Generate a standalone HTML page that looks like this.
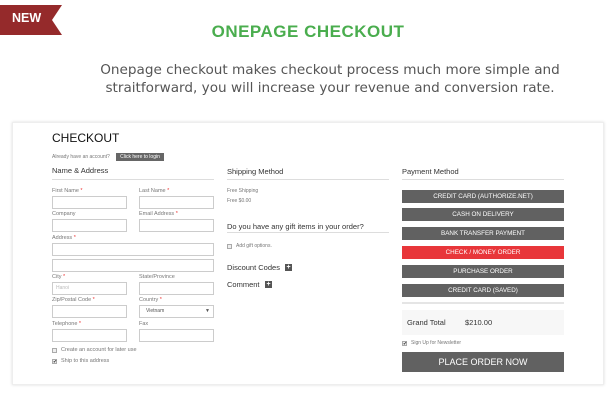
<!DOCTYPE html>
<html><head><style>
*{margin:0;padding:0;box-sizing:border-box}
body{width:616px;height:407px;background:#fff;font-family:"Liberation Sans",sans-serif;position:relative;overflow:hidden;color:#333}
.a{position:absolute;white-space:nowrap}
.l{font-size:5.5px;color:#777}
.l b{color:#e33;font-weight:normal}
.in{position:absolute;border:1px solid #ccc;height:13px;background:#fff}
.h{font-size:7.5px;color:#333}
.ln{position:absolute;height:1px;background:#ddd}
.btn{position:absolute;left:402px;width:162px;height:13px;background:#616161;color:#fff;font-size:6.3px;text-align:center;line-height:13px}
.cb{position:absolute;width:5px;height:5px;border:1px solid #aaa;background:#eee}
.pl{position:absolute;width:7px;height:7px;background:#555;color:#fff;font-size:7px;line-height:7px;text-align:center;font-weight:bold}
</style></head><body>
<svg class="a" style="left:0;top:5px" width="63" height="30"><polygon points="0,0 62,0 52,15 62,30 0,30" fill="#952a2b"/></svg>
<div class="a" style="left:12px;top:11px;color:#fff;font-weight:bold;font-size:12.5px">NEW</div>
<div class="a" style="left:0;width:616px;text-align:center;top:22px;color:#4aad4e;font-weight:bold;font-size:17px;letter-spacing:.5px">ONEPAGE CHECKOUT</div>
<div class="a" style="left:74px;width:512px;text-align:center;top:61px;color:#555;line-height:18px;font-family:'DejaVu Sans',sans-serif;font-size:13.6px">Onepage checkout makes checkout process much more simple and<br>straitforward, you will increase your revenue and conversion rate.</div>
<div class="a" style="left:12px;top:122px;width:592px;height:263px;border:1px solid #eee;box-shadow:0 0 3px #ddd"></div>
<div class="a" style="left:52px;top:131px;font-size:12px;color:#111">CHECKOUT</div>
<div class="a l" style="left:52px;top:154px;font-size:5px">Already have an account?</div>
<div class="a" style="left:116px;top:153px;width:48px;height:8px;background:#666;color:#fff;font-size:5px;line-height:8px;text-align:center">Click here to login</div>
<div class="a h" style="left:52px;top:166px">Name &amp; Address</div>
<div class="ln" style="left:52px;top:179px;width:162px"></div>
<div class="a l" style="left:52px;top:188px">First Name <b>*</b></div><div class="in" style="left:52px;top:196px;width:75px"></div>
<div class="a l" style="left:139px;top:188px">Last Name <b>*</b></div><div class="in" style="left:139px;top:196px;width:75px"></div>
<div class="a l" style="left:52px;top:211px">Company</div><div class="in" style="left:52px;top:219px;width:75px"></div>
<div class="a l" style="left:139px;top:211px">Email Address <b>*</b></div><div class="in" style="left:139px;top:219px;width:75px"></div>
<div class="a l" style="left:52px;top:235px">Address <b>*</b></div><div class="in" style="left:52px;top:243px;width:162px"></div>
<div class="in" style="left:52px;top:259px;width:162px"></div>
<div class="a l" style="left:52px;top:274px">City <b>*</b></div><div class="in" style="left:52px;top:282px;width:75px;font-size:5px;color:#bbb;padding-left:3px;line-height:11px">Hanoi</div>
<div class="a l" style="left:139px;top:274px">State/Province</div><div class="in" style="left:139px;top:282px;width:75px"></div>
<div class="a l" style="left:52px;top:297px">Zip/Postal Code <b>*</b></div><div class="in" style="left:52px;top:305px;width:75px"></div>
<div class="a l" style="left:139px;top:297px">Country <b>*</b></div><div class="in" style="left:139px;top:305px;width:75px;font-size:5px;color:#555;padding-left:6px;line-height:11px">Vietnam<span style="position:absolute;right:3px">▼</span></div>
<div class="a l" style="left:52px;top:321px">Telephone <b>*</b></div><div class="in" style="left:52px;top:329px;width:75px"></div>
<div class="a l" style="left:139px;top:321px">Fax</div><div class="in" style="left:139px;top:329px;width:75px"></div>
<div class="cb" style="left:52px;top:348px"></div><div class="a l" style="left:61px;top:347px">Create an account for later use</div>
<div class="cb" style="left:52px;top:359px;font-size:5px;line-height:4px;color:#333">✔</div><div class="a l" style="left:61px;top:358px">Ship to this address</div>
<div class="a h" style="left:227px;top:167px">Shipping Method</div>
<div class="ln" style="left:227px;top:179px;width:162px"></div>
<div class="a l" style="left:227px;top:188px;font-size:5px">Free Shipping</div>
<div class="a l" style="left:227px;top:198px;font-size:5px">Free $0.00</div>
<div class="a h" style="left:227px;top:222px">Do you have any gift items in your order?</div>
<div class="ln" style="left:227px;top:232px;width:162px"></div>
<div class="cb" style="left:227px;top:244px"></div><div class="a l" style="left:236px;top:243px;font-size:5px">Add gift options.</div>
<div class="a h" style="left:227px;top:263px">Discount Codes</div><div class="pl" style="left:285px;top:264px">+</div>
<div class="a h" style="left:227px;top:280px">Comment</div><div class="pl" style="left:265px;top:281px">+</div>
<div class="a h" style="left:402px;top:167px">Payment Method</div>
<div class="ln" style="left:402px;top:179px;width:162px"></div>
<div class="btn" style="top:190px">CREDIT CARD (AUTHORIZE.NET)</div>
<div class="btn" style="top:208px">CASH ON DELIVERY</div>
<div class="btn" style="top:227px">BANK TRANSFER PAYMENT</div>
<div class="btn" style="top:246px;background:#e8363a">CHECK / MONEY ORDER</div>
<div class="btn" style="top:265px">PURCHASE ORDER</div>
<div class="btn" style="top:284px">CREDIT CARD (SAVED)</div>
<div class="ln" style="left:402px;top:302px;width:162px;height:2px;background:#e5e5e5"></div>
<div class="a" style="left:402px;top:310px;width:162px;height:25px;background:#f7f7f7"></div>
<div class="a h" style="left:407px;top:318px">Grand Total</div>
<div class="a h" style="left:465px;top:318px">$210.00</div>
<div class="cb" style="left:402px;top:341px;font-size:5px;line-height:4px;color:#333">✔</div><div class="a l" style="left:411px;top:340px;font-size:5px">Sign Up for Newsletter</div>
<div class="btn" style="top:352px;height:20px;line-height:20px;font-size:9px">PLACE ORDER NOW</div>
</body></html>
